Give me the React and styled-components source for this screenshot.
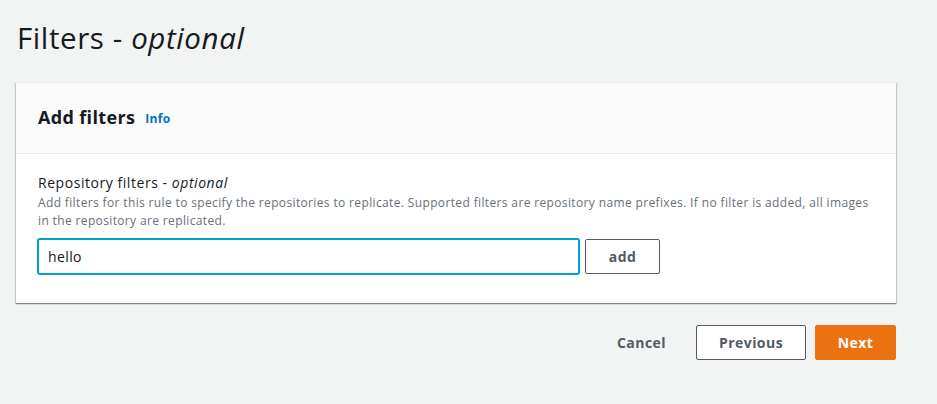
import React from "react";
import styled, { createGlobalStyle } from "styled-components";

const Global = createGlobalStyle`
  html, body { margin: 0; padding: 0; background: #f2f3f3; }
  body { font-family: "Open Sans", "Noto Sans", Arial, sans-serif; color: #16191f; }
  * { box-sizing: border-box; }
`;

const Page = styled.div`
  padding: 14px 41px 40px 16px;
  min-height: 404px;
  display: flex;
  flex-direction: column;
`;

const Title = styled.h1`
  margin: 0 0 0 1px;
  font-size: 29.5px;
  line-height: 48px;
  font-weight: 400;
  color: #16191f;
  letter-spacing: 0.6px;
  em { font-style: italic; }
`;

const Card = styled.section`
  margin-top: 20px;
  background: #fff;
  box-shadow: 0 1px 1px 0 rgba(0, 28, 36, 0.3), 1px 1px 1px 0 rgba(0, 28, 36, 0.15),
    -1px 1px 1px 0 rgba(0, 28, 36, 0.15);
  border-top: 1px solid #eaeded;
`;

const CardHeader = styled.div`
  background: #fafafa;
  border-bottom: 1px solid #eaeded;
  padding: 19px 22px 21px;
  height: 71px;
  display: flex;
  align-items: center;
  gap: 10px;
`;

const CardTitle = styled.h2`
  margin: 0;
  font-size: 18px;
  font-weight: 700;
  line-height: 28px;
  letter-spacing: 0.35px;
`;

const InfoLink = styled.a`
  font-size: 12px;
  font-weight: 700;
  color: #0073bb;
  text-decoration: none;
  letter-spacing: 0.3px;
  margin-top: 2px;
`;

const CardBody = styled.div`
  padding: 18px 20px 28px 21px;
`;

const Label = styled.div`
  font-size: 14px;
  line-height: 22px;
  color: #16191f;
  margin-left: 1px;
  letter-spacing: 0.55px;
  em { font-style: italic; }
`;

const Description = styled.div`
  font-size: 12px;
  line-height: 18px;
  color: #687078;
  margin-left: 1px;
  letter-spacing: 0.36px;
`;

const Row = styled.div`
  margin-top: 8px;
  display: flex;
  align-items: center;
  gap: 5px;
`;

const Input = styled.input`
  width: 543px;
  height: 37px;
  flex: none;
  border: 2px solid #00a1c9;
  border-radius: 3px;
  padding: 0 9px;
  font-family: inherit;
  font-size: 14px;
  letter-spacing: 0.4px;
  color: #16191f;
  outline: none;
  background: #fff;
`;

const Button = styled.button`
  height: ${(p) => p.$h || 35}px;
  min-width: ${(p) => p.$w}px;
  border-radius: 2px;
  font-family: inherit;
  font-size: 14px;
  font-weight: 700;
  letter-spacing: 0.45px;
  cursor: pointer;
  padding: 0 20px;
  background: ${(p) => (p.$variant === "primary" ? "#ec7211" : p.$variant === "link" ? "transparent" : "#fff")};
  color: ${(p) => (p.$variant === "primary" ? "#fff" : "#545b64")};
  border: 1px solid
    ${(p) => (p.$variant === "primary" ? "#ec7211" : p.$variant === "link" ? "transparent" : "#545b64")};
`;

const Footer = styled.div`
  margin-top: 22px;
  display: flex;
  justify-content: flex-end;
  align-items: center;
  gap: 9px;
`;

export default function App() {
  return (
    <>
      <Global />
      <Page>
        <Title>
          Filters - <em>optional</em>
        </Title>
        <Card>
          <CardHeader>
            <CardTitle>Add filters</CardTitle>
            <InfoLink href="#">Info</InfoLink>
          </CardHeader>
          <CardBody>
            <Label>
              Repository filters - <em>optional</em>
            </Label>
            <Description>
              Add filters for this rule to specify the repositories to replicate. Supported filters are repository name
              prefixes. If no filter is added, all images in the repository are replicated.
            </Description>
            <Row>
              <Input defaultValue="hello" />
              <Button $w={75}>add</Button>
            </Row>
          </CardBody>
        </Card>
        <Footer>
          <Button $variant="link" $w={80}>Cancel</Button>
          <Button $w={110}>Previous</Button>
          <Button $variant="primary" $w={81}>Next</Button>
        </Footer>
      </Page>
    </>
  );
}
